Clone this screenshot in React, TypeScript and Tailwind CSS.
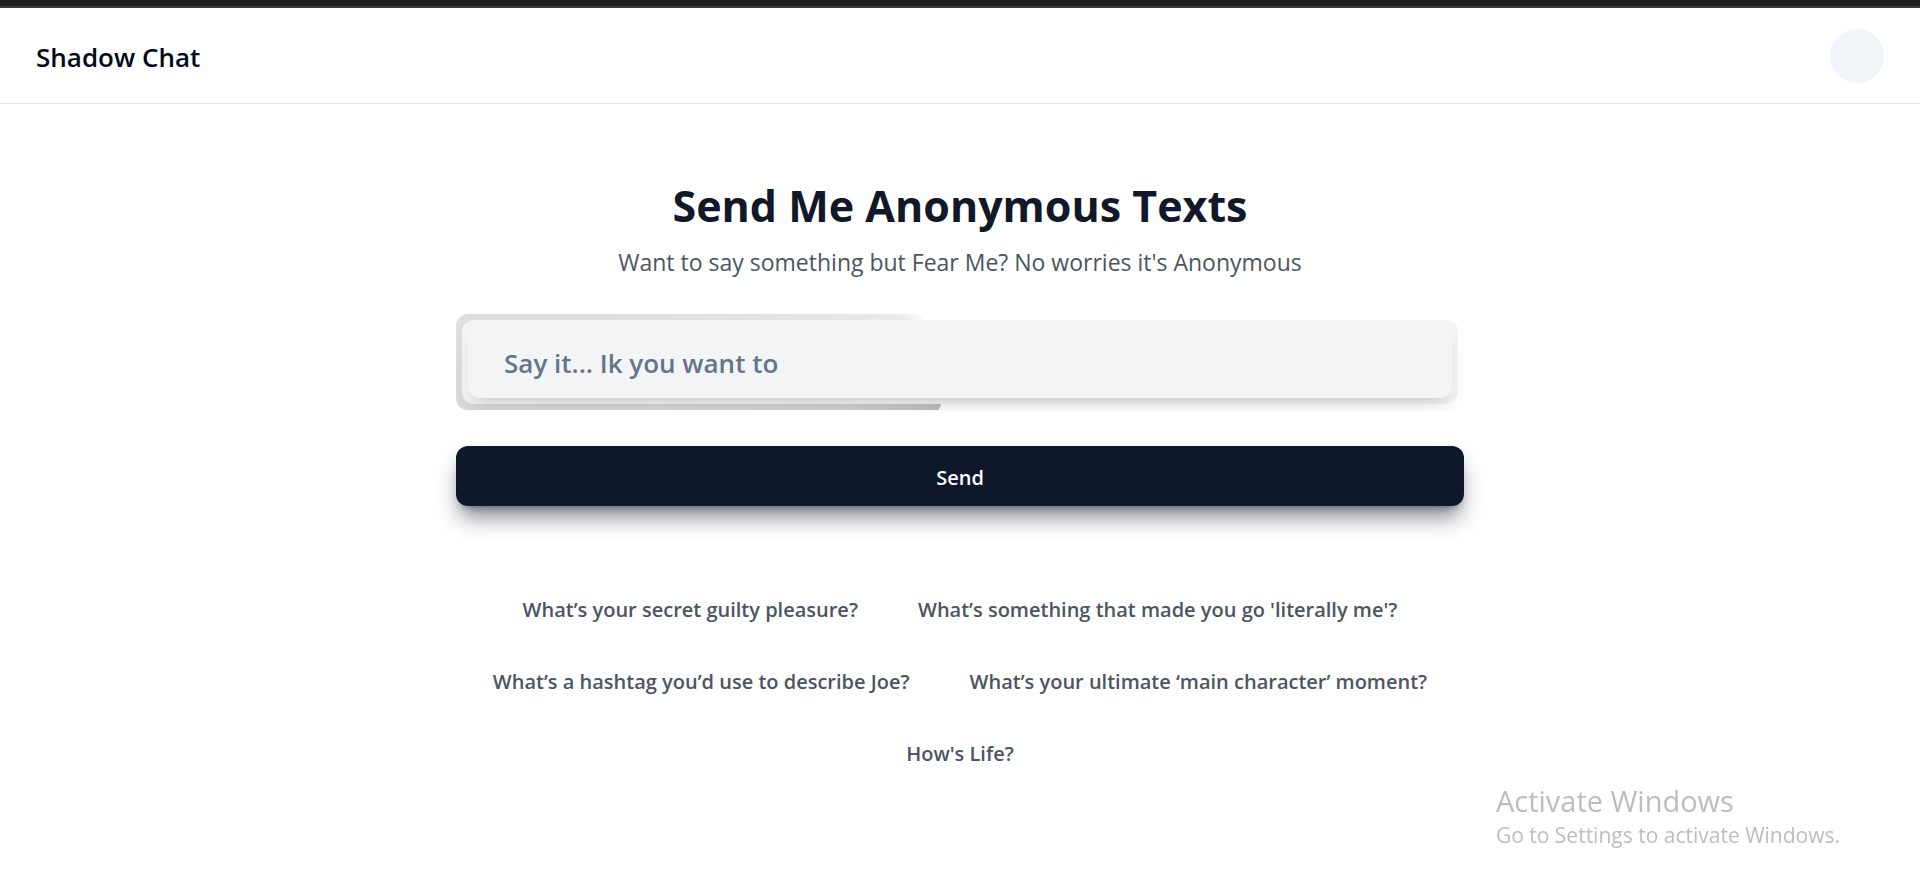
const questions = [
  "What’s your secret guilty pleasure?",
  "What’s something that made you go 'literally me'?",
  "What’s a hashtag you’d use to describe Joe?",
  "What’s your ultimate ‘main character’ moment?",
  "How's Life?",
];

export default function App() {
  return (
    <div className="min-h-screen bg-white font-['Open_Sans',sans-serif] text-[#020817]">
      <div className="h-2 border-b-2 border-[#3c3c3c] bg-[#202020]" />
      <header className="flex h-24 items-center justify-between border-b border-[#e4e4ec] px-9">
        <a href="#" className="pt-1 text-[26px] font-semibold">Shadow Chat</a>
        <button type="button" aria-label="Account" className="size-[54px] rounded-full bg-slate-100" />
      </header>
      <main className="mx-auto flex max-w-[1008px] flex-col pt-[72px]">
        <h1 className="text-center text-[43px] leading-[60px] font-bold text-[#111827]">Send Me Anonymous Texts</h1>
        <p className="mt-2 text-center text-[23px] leading-9 text-[#4b5563]">
          Want to say something but Fear Me? No worries it's Anonymous
        </p>
        <form className="mt-[34px] flex flex-col gap-9" onSubmit={(e) => e.preventDefault()}>
          <div className="overflow-hidden rounded-xl bg-[conic-gradient(from_204deg_at_50%_50%,#bcbcbc_0deg,#d3d3d3_50deg,#dcdcdc_66deg,#e3e3e3_80deg,#ebebeb_103deg,#ffffff_119deg)] p-1.5 shadow-[0_0_3px_rgba(0,0,0,0.04)]">
            <div className="rounded-xl bg-[#f3f4f6] px-1.5 pb-1.5">
              <input
                aria-label="Message"
                placeholder="Say it... Ik you want to"
                className="block h-[78px] w-full rounded-xl bg-[#f3f4f6] px-9 pt-2 text-[26px] font-semibold shadow-[0_15px_22px_-4px_rgba(0,0,0,0.1),0_6px_9px_-6px_rgba(0,0,0,0.1)] outline-none placeholder:text-[#64748b]"
              />
            </div>
          </div>
          <button type="submit" className="h-[60px] rounded-xl bg-[#0f172a] pt-1 text-[20px] font-semibold text-slate-50 shadow-[0_15px_22px_-4px_rgba(15,23,42,0.5),0_6px_9px_-6px_rgba(15,23,42,0.5)]">
            Send
          </button>
        </form>
        <div className="mt-[72px] flex flex-wrap justify-center gap-3">
          {questions.map((q) => (
            <button key={q} type="button" className="h-[60px] px-6 pt-1 text-[20px] font-semibold text-[#4b5563]">
              {q}
            </button>
          ))}
        </div>
      </main>
      <aside className="fixed right-20 bottom-[38px] text-[#bdbdbd]">
        <div className="text-[29px] leading-9">Activate Windows</div>
        <div className="text-[21px] leading-8">Go to Settings to activate Windows.</div>
      </aside>
    </div>
  );
}
